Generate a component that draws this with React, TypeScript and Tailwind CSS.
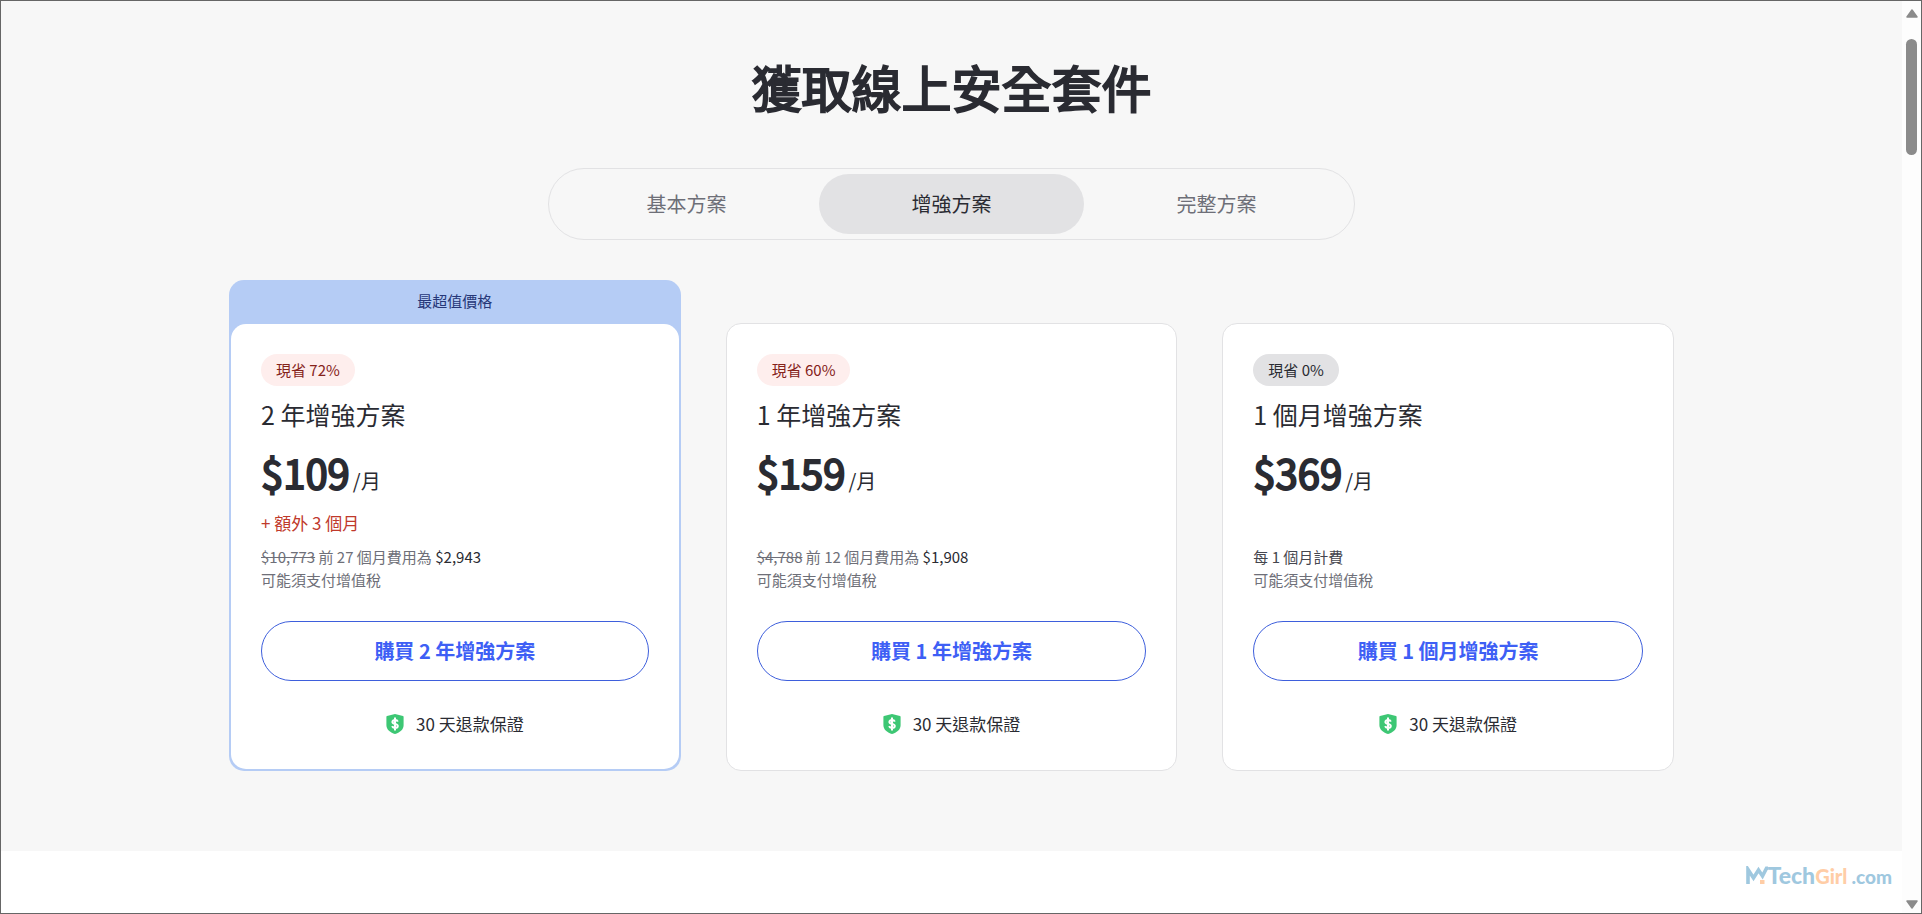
import { useState } from "react";

type Plan = {
  id: string;
  discount: string;
  title: string;
  price: string;
  extra?: string;
  oldTotal?: string;
  billing: string;
  total?: string;
  best?: boolean;
};

const tabs = ["基本方案", "增強方案", "完整方案"];

const plans: Plan[] = [
  {
    id: "2y",
    discount: "現省 72%",
    title: "2 年增強方案",
    price: "$109",
    extra: "+ 額外 3 個月",
    oldTotal: "$10,773",
    billing: "前 27 個月費用為",
    total: "$2,943",
    best: true,
  },
  {
    id: "1y",
    discount: "現省 60%",
    title: "1 年增強方案",
    price: "$159",
    oldTotal: "$4,788",
    billing: "前 12 個月費用為",
    total: "$1,908",
  },
  {
    id: "1m",
    discount: "現省 0%",
    title: "1 個月增強方案",
    price: "$369",
    billing: "每 1 個月計費",
  },
];

function ShieldIcon() {
  return (
    <svg viewBox="0 0 18 20" className="h-5 w-[18px]" aria-hidden="true">
      <path
        d="M9 0 L17 2 Q17.6 2.2 17.6 3 V11 C17.6 16 13.5 18.6 9 20 C4.5 18.6 0.4 16 0.4 11 V3 Q0.4 2.2 1 2 Z"
        fill="#3dc774"
      />
      <path
        d="M11.8 7.7 C11.4 6.6 10.3 6.1 9 6.1 C7.4 6.1 6.4 6.8 6.4 7.9 C6.4 10.6 11.8 9.2 11.8 12 C11.8 13.2 10.7 13.9 9 13.9 C7.5 13.9 6.5 13.3 6.1 12.2 M9 3.6 V16.4"
        fill="none"
        stroke="#fff"
        strokeWidth="2"
      />
    </svg>
  );
}

function PlanCard({ plan }: { plan: Plan }) {
  const card = (
    <div
      className={
        plan.best
          ? "rounded-[15px] bg-white p-[30px]"
          : "rounded-[15px] border border-[#e2e2e4] bg-white px-[30px] pt-[30px] pb-[31px]"
      }
    >
      <p
        className={
          plan.total
            ? "flex h-8 w-fit items-center rounded-full bg-[#feeeed] px-[15px] text-[15px] text-[#85221a]"
            : "flex h-8 w-fit items-center rounded-full bg-[#e2e2e4] px-[15px] text-[15px] text-[#2a2b32]"
        }
      >
        {plan.discount}
      </p>
      <h2 className="mt-[10px] text-[25px] leading-9">{plan.title}</h2>
      <p className="mt-[10px] flex items-baseline gap-[3px] leading-[60px]">
        <strong className="text-[40px] font-normal [-webkit-text-stroke:2px_#2a2b32]">{plan.price}</strong>
        <span className="text-[20px] leading-none">/月</span>
      </p>
      <p className="mt-[3px] h-9 text-[17px] leading-9 text-[#c0392b]">{plan.extra}</p>
      <p className="mt-1 text-[15px] leading-[23px] text-[#6e6f78]">
        {plan.oldTotal && <s>{plan.oldTotal}</s>}{" "}
        <span className={plan.total ? "" : "text-[#45464e]"}>{plan.billing}</span>{" "}
        {plan.total && <span className="text-[#2a2b32]">{plan.total}</span>}
        <br />
        可能須支付增值稅
      </p>
      <button
        type="button"
        className="mt-[30px] h-[60px] w-full cursor-pointer rounded-full border border-[#3e5fdc] text-[20px] font-bold text-[#3e5ff5]"
      >
        購買 {plan.title}
      </button>
      <p className="mt-[29px] mb-px flex items-center justify-center gap-3 text-[17px] leading-7">
        <ShieldIcon />
        30 天退款保證
      </p>
    </div>
  );

  if (!plan.best) return card;

  return (
    <div className="rounded-[15px] bg-[#b5ccf5] px-[2px] pb-[2px]">
      <p className="h-11 text-center text-[15px] leading-[42px] text-[#263778]">最超值價格</p>
      {card}
    </div>
  );
}

function Watermark() {
  return (
    <div className="flex items-baseline font-[Lato,sans-serif] leading-7 font-black text-[#9fc8df]">
      <svg viewBox="0 0 22 18" className="h-[18px] w-[22px]" role="img" aria-label="My">
        <path d="M2 18 V3.5 L7.5 12 L12.5 4 L16.5 10 L20.5 2.2 H22" fill="none" stroke="#9fc8df" strokeWidth="3.6" />
        <rect x="14" y="14" width="4.5" height="4" fill="#ffcda6" />
      </svg>
      <span className="text-[23px]">Tech</span>
      <span className="text-[20px] text-[#ffcda6]">Girl</span>
      <span className="ml-1 text-[19px]">.com</span>
    </div>
  );
}

function Scrollbar() {
  return (
    <div className="flex w-[19px] shrink-0 flex-col items-center justify-between bg-[#fdfdfd] py-1" aria-hidden="true">
      <div className="flex flex-col items-center gap-[21px] pt-1">
        <svg viewBox="0 0 12 9" className="h-[9px] w-3">
          <path d="M6 1 L11 8 H1 Z" fill="#8b8b8b" stroke="#8b8b8b" strokeWidth="1.5" strokeLinejoin="round" />
        </svg>
        <div className="h-[116px] w-[11px] rounded-full bg-[#8b8b8b]" />
      </div>
      <svg viewBox="0 0 12 9" className="h-[9px] w-3">
        <path d="M1 1 H11 L6 8 Z" fill="#8b8b8b" stroke="#8b8b8b" strokeWidth="1.5" strokeLinejoin="round" />
      </svg>
    </div>
  );
}

export default function App() {
  const [active, setActive] = useState(1);

  return (
    <div className="flex min-h-screen border border-[#666] bg-white font-['Noto_Sans_CJK_TC',sans-serif] text-[#2a2b32]">
      <div className="flex min-w-0 flex-1 flex-col">
        <section className="bg-[#f7f7f7] px-6 pt-12 pb-20">
          <h1 className="text-center text-[50px] leading-[75px] font-normal [-webkit-text-stroke:2px_#2a2b32]">
            獲取線上安全套件
          </h1>

          <div
            role="tablist"
            className="mx-auto mt-11 grid max-w-[807px] grid-cols-3 rounded-full border border-[#e2e2e4] p-[5px]"
          >
            {tabs.map((tab, i) => (
              <button
                key={tab}
                type="button"
                role="tab"
                aria-selected={i === active}
                onClick={() => setActive(i)}
                className={
                  i === active
                    ? "h-[60px] cursor-pointer rounded-full bg-[#e2e2e4] text-[20px] text-[#2a2b32]"
                    : "h-[60px] cursor-pointer rounded-full text-[20px] text-[#6e6f78]"
                }
              >
                {tab}
              </button>
            ))}
          </div>

          <div className="mx-auto mt-10 grid max-w-[1445px] grid-cols-1 items-end gap-[45px] lg:grid-cols-3">
            {plans.map((plan) => (
              <PlanCard key={plan.id} plan={plan} />
            ))}
          </div>
        </section>

        <footer className="flex justify-end px-[10px] py-[10px]">
          <Watermark />
        </footer>
      </div>
      <Scrollbar />
    </div>
  );
}
